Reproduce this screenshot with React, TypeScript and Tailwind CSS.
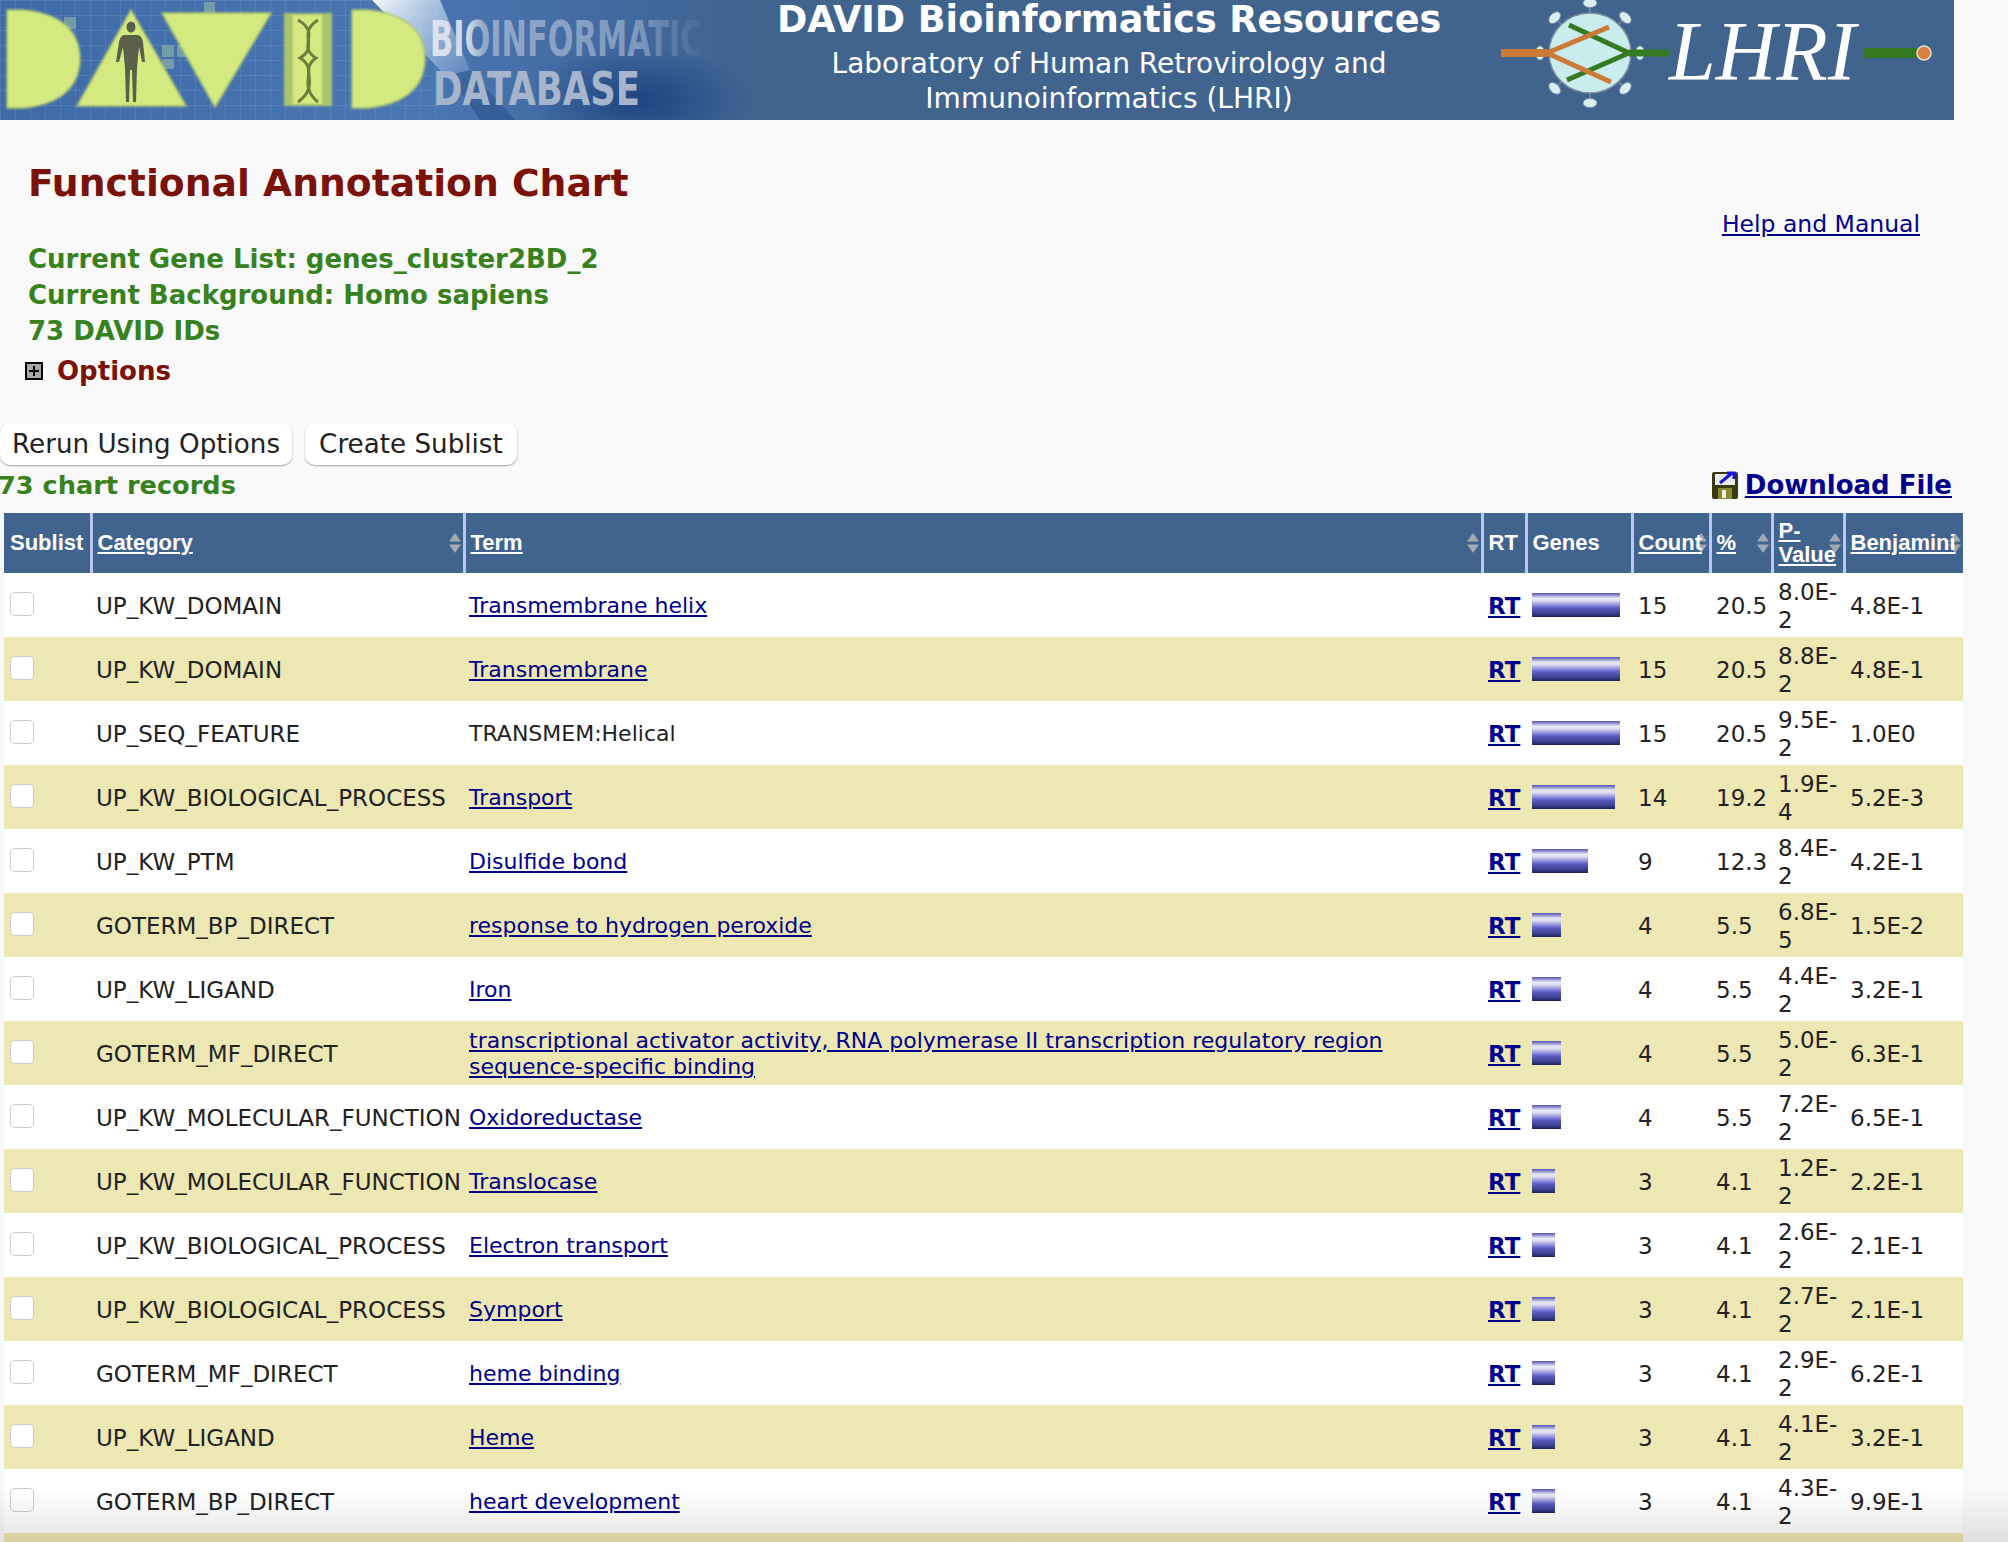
const FONT = "font-['DejaVu_Sans',sans-serif]";

type Row = { cat: string; term: string; link: boolean; count: number; pct: string; p: string; b: string };

const ROWS: Row[] = [
  { cat: "UP_KW_DOMAIN", term: "Transmembrane helix", link: true, count: 15, pct: "20.5", p: "8.0E-2", b: "4.8E-1" },
  { cat: "UP_KW_DOMAIN", term: "Transmembrane", link: true, count: 15, pct: "20.5", p: "8.8E-2", b: "4.8E-1" },
  { cat: "UP_SEQ_FEATURE", term: "TRANSMEM:Helical", link: false, count: 15, pct: "20.5", p: "9.5E-2", b: "1.0E0" },
  { cat: "UP_KW_BIOLOGICAL_PROCESS", term: "Transport", link: true, count: 14, pct: "19.2", p: "1.9E-4", b: "5.2E-3" },
  { cat: "UP_KW_PTM", term: "Disulfide bond", link: true, count: 9, pct: "12.3", p: "8.4E-2", b: "4.2E-1" },
  { cat: "GOTERM_BP_DIRECT", term: "response to hydrogen peroxide", link: true, count: 4, pct: "5.5", p: "6.8E-5", b: "1.5E-2" },
  { cat: "UP_KW_LIGAND", term: "Iron", link: true, count: 4, pct: "5.5", p: "4.4E-2", b: "3.2E-1" },
  { cat: "GOTERM_MF_DIRECT", term: "transcriptional activator activity, RNA polymerase II transcription regulatory region sequence-specific binding", link: true, count: 4, pct: "5.5", p: "5.0E-2", b: "6.3E-1" },
  { cat: "UP_KW_MOLECULAR_FUNCTION", term: "Oxidoreductase", link: true, count: 4, pct: "5.5", p: "7.2E-2", b: "6.5E-1" },
  { cat: "UP_KW_MOLECULAR_FUNCTION", term: "Translocase", link: true, count: 3, pct: "4.1", p: "1.2E-2", b: "2.2E-1" },
  { cat: "UP_KW_BIOLOGICAL_PROCESS", term: "Electron transport", link: true, count: 3, pct: "4.1", p: "2.6E-2", b: "2.1E-1" },
  { cat: "UP_KW_BIOLOGICAL_PROCESS", term: "Symport", link: true, count: 3, pct: "4.1", p: "2.7E-2", b: "2.1E-1" },
  { cat: "GOTERM_MF_DIRECT", term: "heme binding", link: true, count: 3, pct: "4.1", p: "2.9E-2", b: "6.2E-1" },
  { cat: "UP_KW_LIGAND", term: "Heme", link: true, count: 3, pct: "4.1", p: "4.1E-2", b: "3.2E-1" },
  { cat: "GOTERM_BP_DIRECT", term: "heart development", link: true, count: 3, pct: "4.1", p: "4.3E-2", b: "9.9E-1" },
];

const SortArrows = () => (
  <svg width="14" height="22" viewBox="0 0 14 22" className="absolute right-[1px] top-1/2 -translate-y-1/2">
    <path d="M7 1 L13 9.5 H1 Z" fill="#a3a9b2" />
    <path d="M7 21 L13 12.5 H1 Z" fill="#a3a9b2" />
  </svg>
);

const DavidLogo = () => (
  <svg width="760" height="120" viewBox="0 0 760 120">
    <defs>
      <linearGradient id="bannerBg" x1="0" x2="1" y1="0" y2="0">
        <stop offset="0" stopColor="#3f6aa8" />
        <stop offset="0.55" stopColor="#4a76b2" />
        <stop offset="0.8" stopColor="#426a9f" />
        <stop offset="1" stopColor="#41648f" />
      </linearGradient>
      <radialGradient id="darkPool" cx="0.5" cy="0.5" r="0.5">
        <stop offset="0" stopColor="#1f4480" stopOpacity="1" />
        <stop offset="1" stopColor="#1f4480" stopOpacity="0" />
      </radialGradient>
      <linearGradient id="flare" x1="0" x2="1" y1="0" y2="0.6">
        <stop offset="0" stopColor="#ffffff" stopOpacity="0.95" />
        <stop offset="1" stopColor="#9cc0ea" stopOpacity="0" />
      </linearGradient>
      <linearGradient id="bioFade" x1="0" x2="1" y1="0" y2="0">
        <stop offset="0" stopColor="#dfe5ee" />
        <stop offset="0.13" stopColor="#cfd8e6" />
        <stop offset="0.18" stopColor="#93a9ca" />
        <stop offset="0.7" stopColor="#7f99bf" />
        <stop offset="0.95" stopColor="#6a8ab5" stopOpacity="0" />
      </linearGradient>
      <pattern id="logoGrid" width="15" height="15" patternUnits="userSpaceOnUse">
        <path d="M15 0H0V15" fill="none" stroke="#8fb0d8" strokeOpacity="0.4" strokeWidth="1" />
      </pattern>
      <filter id="soft" x="-5%" y="-5%" width="110%" height="110%">
        <feGaussianBlur stdDeviation="0.8" />
      </filter>
    </defs>
    <rect width="760" height="120" fill="url(#bannerBg)" />
    <ellipse cx="640" cy="100" rx="115" ry="55" fill="url(#darkPool)" />
    <rect width="440" height="120" fill="url(#logoGrid)" />
    <path d="M372 0 H440 L470 70 L520 120 H490 L440 70 Z" fill="url(#flare)" />
    <path d="M470 70 L515 120 H480 L450 75 Z" fill="#2e5590" opacity="0.7" />
    <g fill="#7fa6a8" opacity="0.8">
      <rect x="64" y="17" width="12" height="12" />
      <rect x="162" y="45" width="12" height="12" />
      <rect x="177" y="45" width="10" height="12" />
      <rect x="162" y="59" width="12" height="10" />
      <rect x="204" y="2" width="11" height="11" />
    </g>
    <g filter="url(#soft)">
      <path d="M7 10 H24 Q80 16 80 60 Q78 102 24 108 H7 Z" fill="#d5e981" stroke="#a8c46a" strokeWidth="1.5" />
      <path d="M131 10 L186 106 H77 Z" fill="#d5e981" stroke="#a8c46a" strokeWidth="1.5" />
      <path d="M162 13 H271 L215 107 Z" fill="#d5e981" stroke="#a8c46a" strokeWidth="1.5" />
      <rect x="284" y="13" width="48" height="93" fill="#a9c56c" />
      <rect x="293" y="15" width="29" height="89" fill="#d5e981" />
      <path d="M352 10 H368 Q425 16 425 60 Q423 102 368 108 H352 Z" fill="#d5e981" stroke="#a8c46a" strokeWidth="1.5" />
    </g>
    {/* figure */}
    <g fill="#5b6148">
      <ellipse cx="131" cy="27" rx="4.5" ry="5.5" />
      <path d="M124 35 H138 Q142 36 143 42 L145 62 H142 L139 47 L137 68 L136 102 H133 L132 70 H130 L129 102 H126 L125 68 L123 47 L119 62 H116 L119 42 Q120 36 124 35 Z" />
    </g>
    {/* DNA helix */}
    <g fill="none" stroke="#6d7d3a" strokeWidth="3">
      <path d="M298 20 C322 34 296 46 316 58 C298 70 322 84 298 102" />
      <path d="M318 20 C296 34 320 46 300 58 C320 70 296 84 318 102" />
    </g>
    <text transform="translate(430 56) scale(0.62 1)" fontFamily="'DejaVu Sans', sans-serif" fontWeight="700" fontSize="49" fill="url(#bioFade)">BIOINFORMATICS</text>
    <text transform="translate(433 105) scale(0.77 1)" fontFamily="'DejaVu Sans', sans-serif" fontWeight="700" fontSize="46" fill="#a6b4cc">DATABASE</text>
  </svg>
);

const LhriLogo = () => (
  <svg width="483" height="120" viewBox="0 0 483 120">
    {[0, 45, 90, 135, 180, 225, 270, 315].map((a) => (
      <g key={a} transform={`rotate(${a} 119 53)`}>
        <line x1="119" y1="5" x2="119" y2="13" stroke="#6e7f96" strokeWidth="2" />
        <ellipse cx="119" cy="3" rx="7" ry="4.5" fill="#d8f0f0" stroke="#7d8ba0" strokeWidth="0.8" />
      </g>
    ))}
    <ellipse cx="119" cy="53" rx="41" ry="40" fill="#c9ecec" stroke="#7d8ba0" strokeWidth="1.5" />
    <path d="M98 25 L158 53 L96 80" fill="none" stroke="#357a20" strokeWidth="5" />
    <path d="M158 53 H199" stroke="#357a20" strokeWidth="7" />
    <path d="M138 27 L76 53 L140 82" fill="none" stroke="#cc7a38" strokeWidth="5" />
    <path d="M30 53 H76" stroke="#cc7a38" strokeWidth="8" />
    <text x="198" y="80" fontFamily="'Liberation Serif', serif" fontStyle="italic" fontSize="84" fill="#ffffff">LHRI</text>
    <rect x="393" y="48" width="53" height="10" fill="#357a20" />
    <circle cx="453" cy="53" r="7" fill="#d98040" stroke="#eadfc8" strokeWidth="1.5" />
  </svg>
);

const FloppyIcon = () => (
  <svg width="26" height="28" viewBox="0 0 26 28" className="shrink-0">
    <rect x="0" y="1" width="26" height="27" rx="2" fill="#3a3a12" />
    <rect x="3" y="3" width="20" height="11" fill="#e9e9e9" />
    <rect x="6" y="17" width="14" height="11" fill="#8a8a2a" />
    <rect x="10" y="19" width="4" height="8" fill="#eeeeee" />
    <path d="M8 12 L20 2 M15 2 H22 V8" fill="none" stroke="#1414e0" strokeWidth="3" />
  </svg>
);

const PlusBox = () => (
  <svg width="18" height="18" viewBox="0 0 18 18" className="shrink-0">
    <rect x="1" y="1" width="16" height="16" fill="#a8a8a8" stroke="#000" strokeWidth="2" />
    <path d="M9 4V14M4 9H14" stroke="#000" strokeWidth="2" />
  </svg>
);

const Th = ({ children, sort, link = true }: { children: React.ReactNode; sort?: boolean; link?: boolean }) => (
  <th className="relative bg-[#41648f] px-[5px] first:pl-[6px] text-left align-middle font-bold text-white text-[22px] leading-[24px] font-['Liberation_Sans',sans-serif] border-r-[3px] border-[#bcc6f2] last:border-r-0">
    {sort && <SortArrows />}
    {link ? <span className="relative underline">{children}</span> : children}
  </th>
);

const Td = ({ children, tight }: { children: React.ReactNode; tight?: boolean }) => (
  <td className={`pt-[2px] align-middle ${tight ? "px-[5px] leading-[26px]" : "px-[6px] leading-[28px]"}`}>{children}</td>
);

export default function App() {
  return (
    <div className={`relative h-[1542px] overflow-hidden bg-[#f9f9f9] text-[#222] ${FONT}`}>
      {/* banner */}
      <header className="flex h-[120px] w-[1954px] overflow-hidden bg-[#41648f] text-white">
        <DavidLogo />
        <div className="w-[698px] shrink-0 pt-[1px] text-center">
          <h1 className="text-[36.5px] font-bold leading-[38px]">DAVID Bioinformatics Resources</h1>
          <p className="mt-[7px] text-[28px] leading-[35px]">
            Laboratory of Human Retrovirology and
            <br />
            Immunoinformatics (LHRI)
          </p>
        </div>
        <div className="ml-[13px]">
          <LhriLogo />
        </div>
      </header>

      {/* page heading */}
      <section className="relative px-[28px] pt-[39px]">
        <h2 className="text-[37.7px] font-bold leading-[48px] text-[#7a1208]">Functional Annotation Chart</h2>
        <div className="mt-[34px] text-[26px] font-bold leading-[36px] text-[#37821f]">
          <div>Current Gene List: genes_cluster2BD_2</div>
          <div>Current Background: Homo sapiens</div>
          <div>73 DAVID IDs</div>
        </div>
        <div className="mt-[4px] -ml-[3px] flex items-center gap-[14px] text-[26px] font-bold leading-[36px] text-[#7a1208]">
          <PlusBox />
          Options
        </div>
        <a className="absolute right-[88px] top-[88px] text-[23.5px] leading-[32px] text-[#00008b] underline">Help and Manual</a>
      </section>

      {/* actions */}
      <div className="mt-[34px] flex gap-[13px]">
        <button className="h-[42px] rounded-[10px] bg-white px-[12px] text-[26.2px] leading-[42px] text-[#222] shadow-[0_1px_2px_rgba(0,0,0,0.35)]">Rerun Using Options</button>
        <button className="h-[42px] rounded-[10px] bg-white px-[14px] text-[26.2px] leading-[42px] text-[#222] shadow-[0_1px_2px_rgba(0,0,0,0.35)]">Create Sublist</button>
      </div>
      <div className="mt-[2px] -ml-[2px] flex h-[36px] w-[1954px] items-center justify-between text-[25.6px] font-bold text-[#37821f]">
        <span>73 chart records</span>
        <a className="flex items-center gap-[7px] text-[26px] text-[#00008b] underline">
          <FloppyIcon />
          Download File
        </a>
      </div>

      {/* chart table */}
      <table className="mt-[10px] ml-[4px] w-[1959px] table-fixed border-collapse text-[23px]">
        <colgroup>
          <col className="w-[87px]" />
          <col className="w-[373px]" />
          <col className="w-[1018px]" />
          <col className="w-[44px]" />
          <col className="w-[106px]" />
          <col className="w-[78px]" />
          <col className="w-[62px]" />
          <col className="w-[72px]" />
          <col className="w-[119px]" />
        </colgroup>
        <thead>
          <tr className="h-[60px]">
            <Th link={false}>Sublist</Th>
            <Th sort>Category</Th>
            <Th sort>Term</Th>
            <Th link={false}>RT</Th>
            <Th link={false}>Genes</Th>
            <Th sort>Count</Th>
            <Th sort>%</Th>
            <Th sort>P-Value</Th>
            <Th sort>Benjamini</Th>
          </tr>
        </thead>
        <tbody>
          {ROWS.map((r, i) => (
            <tr key={i} className={`h-[64px] ${i % 2 ? "bg-[#ede7b3]" : "bg-white"}`}>
              <Td>
                <span className="-mt-[5px] block h-[24px] w-[24px] rounded-[5px] border border-[#ccc] bg-white" />
              </Td>
              <Td tight>{r.cat}</Td>
              <Td tight>
                <span className="block text-[22px]">
                  {r.link ? <a className="text-[#00008b] underline">{r.term}</a> : r.term}
                </span>
              </Td>
              <Td>
                <a className="font-bold text-[#00008b] underline">RT</a>
              </Td>
              <Td>
                <div
                  className="-mt-[2px] h-[24px] bg-[linear-gradient(180deg,#5450b0_0%,#e8e8f6_22%,#dcdcf2_32%,#5c5cc8_62%,#40408f_85%,#1d1d58_100%)]"
                  style={{ width: `${r.count * 5.4 + 7}px` }}
                />
              </Td>
              <Td>{r.count}</Td>
              <Td>{r.pct}</Td>
              <Td>{r.p}</Td>
              <Td>{r.b}</Td>
            </tr>
          ))}
          <tr className="h-[64px] bg-[#ede7b3]">
            <td colSpan={9} />
          </tr>
        </tbody>
      </table>

      {/* bottom fade of the capture */}
      <div className="pointer-events-none absolute inset-x-0 bottom-0 h-[55px] bg-linear-to-b from-transparent to-black/10" />
    </div>
  );
}
